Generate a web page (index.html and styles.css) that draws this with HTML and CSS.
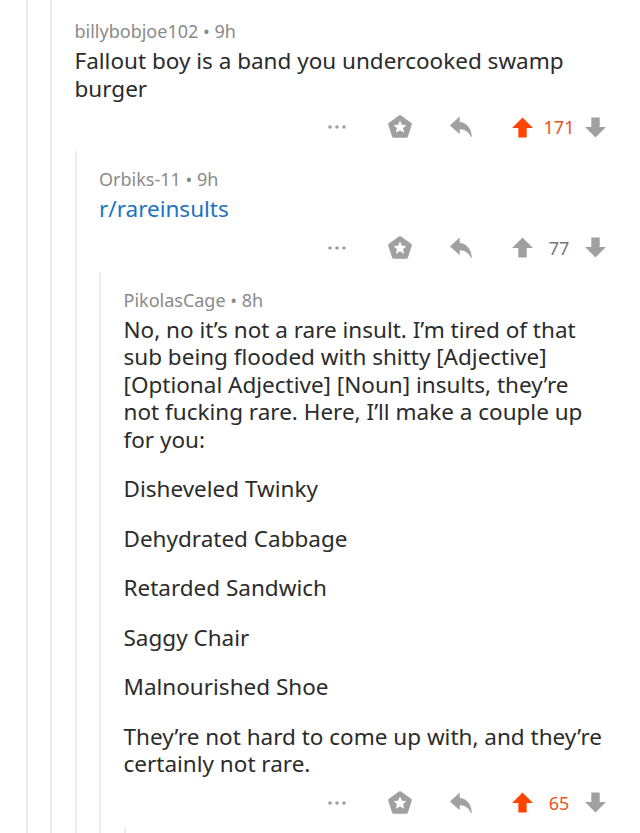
FILE: index.html
```html
<!DOCTYPE html>
<html lang="en">
<head>
<meta charset="utf-8">
<title>Comment thread</title>
<link rel="stylesheet" href="styles.css">
</head>
<body>
<svg width="0" height="0" class="defs" aria-hidden="true">
  <defs>
    <symbol id="i-dots" viewBox="0 0 18 4"><circle cx="2" cy="2" r="1.8"/><circle cx="9" cy="2" r="1.8"/><circle cx="16" cy="2" r="1.8"/></symbol>
    <symbol id="i-award" viewBox="0 0 24 24"><path d="M12 2.8 L21.2 9.5 L17.7 20.3 L6.3 20.3 L2.8 9.5 Z" stroke-linejoin="round" stroke-width="3.4" stroke="currentColor"/><path fill="#fff" d="M12 6.6 L13.6 10.2 L17.4 10.5 L14.5 13 L15.4 16.8 L12 14.8 L8.6 16.8 L9.5 13 L6.6 10.5 L10.4 10.2 Z" stroke="#fff" stroke-width="0.6" stroke-linejoin="round"/></symbol>
    <symbol id="i-reply" viewBox="0 0 22 22"><path d="M9.5 2 L1.2 9.6 L9.5 17 L9.5 12.8 C14.2 12.8 17.6 14.4 20.5 20 C20.4 12.2 16 6.9 9.5 6.6 Z" stroke="currentColor" stroke-width="0.6" stroke-linejoin="round"/></symbol>
    <symbol id="i-up" viewBox="0 0 22 22"><path d="M11 1.5 L21 11.5 L15 11.5 L15 20.5 L7 20.5 L7 11.5 L1 11.5 Z"/></symbol>
    <symbol id="i-down" viewBox="0 0 22 22"><path d="M11 20.5 L21 10.5 L15 10.5 L15 1.5 L7 1.5 L7 10.5 L1 10.5 Z"/></symbol>
  </defs>
</svg>
<div class="page">
  <div class="thread">
    <div class="comment comment-top">
      <div class="meta">billybobjoe102 • 9h</div>
      <div class="body"><p>Fallout boy is a band you undercooked swamp burger</p></div>
      <div class="actions">
        <svg class="ic dots"><use href="#i-dots"/></svg>
        <svg class="ic award"><use href="#i-award"/></svg>
        <svg class="ic reply"><use href="#i-reply"/></svg>
        <svg class="ic vote up on"><use href="#i-up"/></svg>
        <span class="count on">171</span>
        <svg class="ic vote down"><use href="#i-down"/></svg>
      </div>

      <div class="comment">
        <div class="meta">Orbiks-11 • 9h</div>
        <div class="body"><p><a class="sub" href="#">r/rareinsults</a></p></div>
        <div class="actions">
          <svg class="ic dots"><use href="#i-dots"/></svg>
          <svg class="ic award"><use href="#i-award"/></svg>
          <svg class="ic reply"><use href="#i-reply"/></svg>
          <svg class="ic vote up"><use href="#i-up"/></svg>
          <span class="count">77</span>
          <svg class="ic vote down"><use href="#i-down"/></svg>
        </div>

        <div class="comment">
          <div class="meta">PikolasCage • 8h</div>
          <div class="body">
            <p>No, no it’s not a rare insult. I’m tired of that sub being flooded with shitty [Adjective] [Optional Adjective] [Noun] insults, they’re not fucking rare. Here, I’ll make a couple up for you:</p>
            <p>Disheveled Twinky</p>
            <p>Dehydrated Cabbage</p>
            <p>Retarded Sandwich</p>
            <p>Saggy Chair</p>
            <p>Malnourished Shoe</p>
            <p>They’re not hard to come up with, and they’re certainly not rare.</p>
          </div>
          <div class="actions">
            <svg class="ic dots"><use href="#i-dots"/></svg>
            <svg class="ic award"><use href="#i-award"/></svg>
            <svg class="ic reply"><use href="#i-reply"/></svg>
            <svg class="ic vote up on"><use href="#i-up"/></svg>
            <span class="count on">65</span>
            <svg class="ic vote down"><use href="#i-down"/></svg>
          </div>

          <div class="comment comment-next"></div>
        </div>
      </div>
    </div>
  </div>
</div>
</body>
</html>
```
FILE: styles.css
```css
* { box-sizing: border-box; }
html, body { margin: 0; padding: 0; background: #fff; }
body {
  width: 640px;
  height: 833px;
  overflow: hidden;
  font-family: "Noto Sans", "Open Sans", sans-serif;
  color: #2b2b2b;
}
.defs { position: absolute; }
.page { padding-right: 34px; }
.thread {
  margin-left: 26px;
  border-left: 2px solid #ececec;
  padding-left: 22px;
  min-height: 833px;
}
.comment {
  border-left: 2px solid #ececec;
  padding-left: 22.5px;
  padding-top: 17px;
  margin-top: 12px;
}
.comment-top { padding-top: 20px; margin-top: 0; min-height: 833px; }
.comment-next { min-height: 40px; }
.meta {
  font-size: 18px;
  line-height: 22px;
  color: #8a8a8a;
}
.body { margin-top: 5px; }
.body p {
  margin: 0 0 22px;
  font-size: 22.5px;
  line-height: 27.5px;
  color: #2b2b2b;
}
.body p:last-child { margin-bottom: 0; }
.sub { color: #1d72c2; text-decoration: none; }
.actions {
  margin-top: 13px;
  margin-right: -1px;
  height: 24px;
  display: flex;
  align-items: center;
  justify-content: flex-end;
  color: #a0a0a0;
}
.ic { fill: currentColor; display: block; }
.dots { width: 18px; height: 4px; margin-right: 41px; }
.award { width: 26px; height: 26px; margin-right: 36px; }
.reply { width: 24px; height: 24px; margin-right: 38px; }
.vote { width: 23px; height: 23px; }
.vote.on { color: #ff4500; }
.count {
  width: 50px;
  text-align: center;
  font-size: 18px;
  color: #777;
}
.count.on { color: #e9521d; }
```
